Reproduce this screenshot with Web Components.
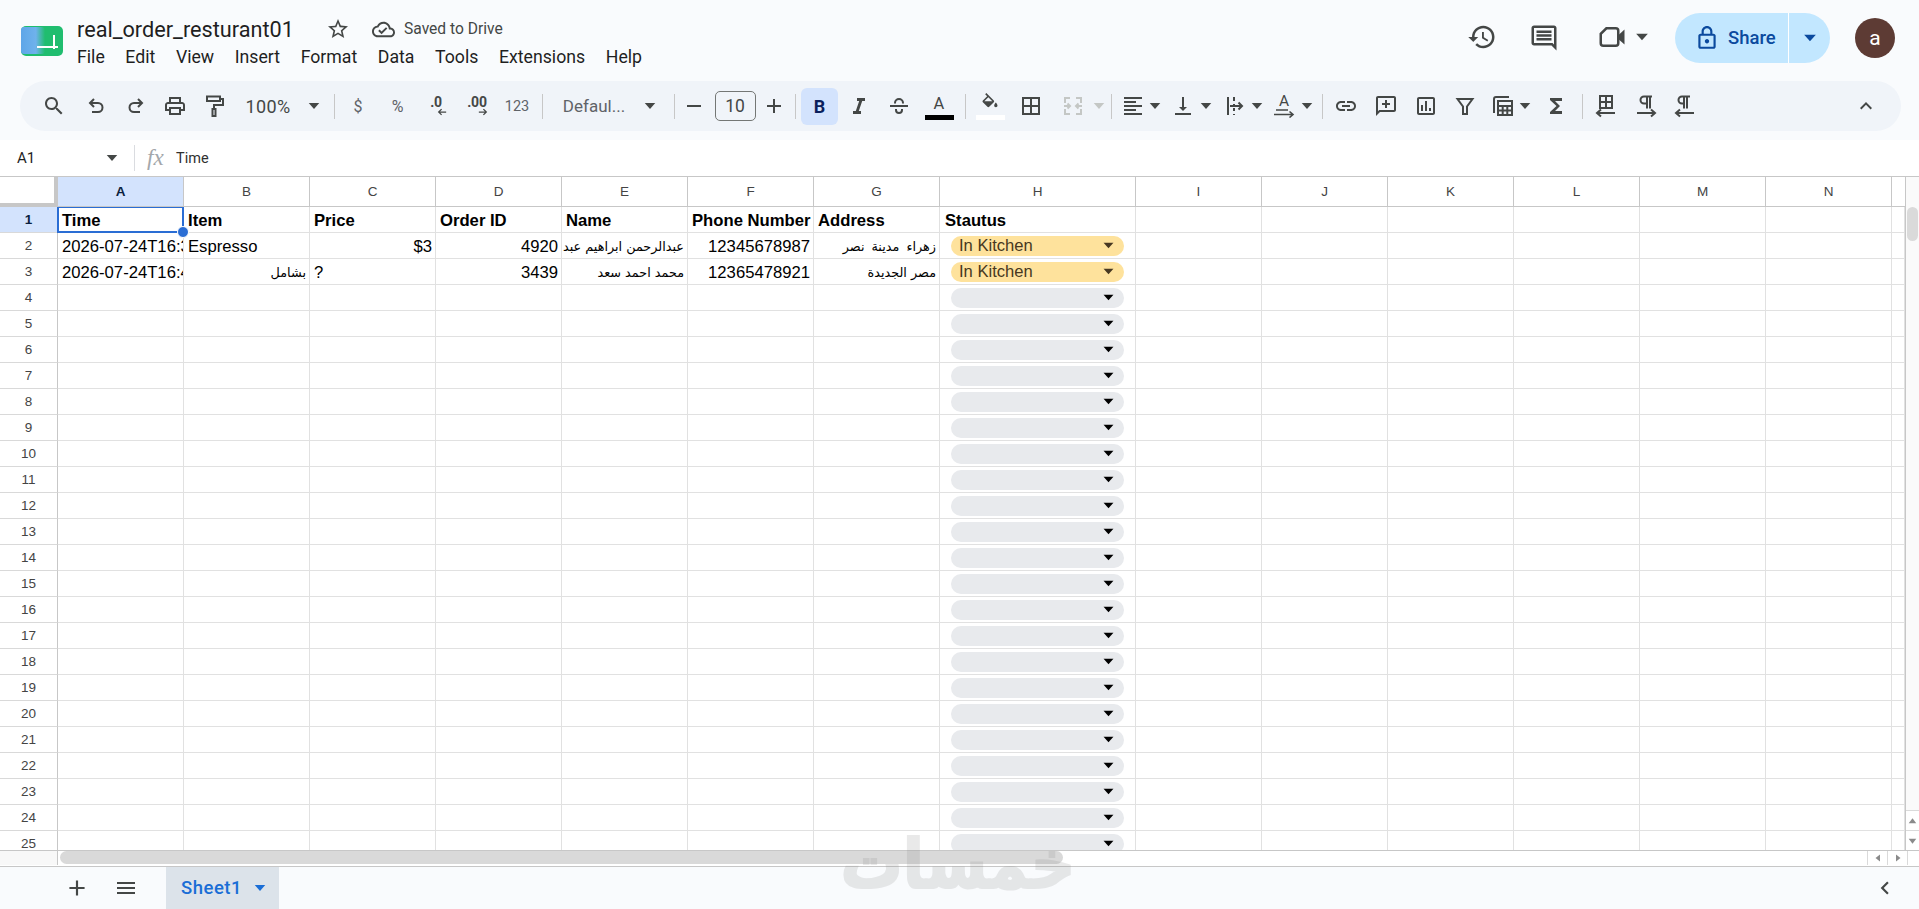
<!DOCTYPE html>
<html lang="en"><head><meta charset="utf-8"><title>real_order_resturant01</title>
<style>
html,body{margin:0;height:100%;overflow:hidden;background:#f9fbfd;font-family:Roboto,"Liberation Sans",sans-serif}
</style></head><body>
<sheet-app>
  <doc-header></doc-header>
  <sheet-toolbar></sheet-toolbar>
  <formula-bar></formula-bar>
  <sheet-grid></sheet-grid>
  <sheet-tabs></sheet-tabs>
  <water-mark>خمسات</water-mark>
</sheet-app>
<script>
const P={
search:'<path d="M15.5 14h-.79l-.28-.27C15.41 12.59 16 11.11 16 9.5 16 5.91 13.09 3 9.5 3S3 5.91 3 9.5 5.91 16 9.5 16c1.61 0 3.09-.59 4.23-1.57l.27.28v.79l5 4.99L20.49 19l-4.99-5zm-6 0C7.01 14 5 11.99 5 9.5S7.01 5 9.5 5 14 7.01 14 9.5 11.99 14 9.5 14z"/>',
undo:'<path fill="none" stroke="currentColor" stroke-width="2" d="M10 5 6 9l4 4M6 9h8a4.5 4.5 0 0 1 0 9H8"/>',
redo:'<path fill="none" stroke="currentColor" stroke-width="2" d="M14 5l4 4-4 4M18 9h-8a4.5 4.5 0 0 0 0 9h6"/>',
print:'<path d="M19 8h-1V3H6v5H5c-1.66 0-3 1.34-3 3v6h4v4h12v-4h4v-6c0-1.66-1.34-3-3-3zM8 5h8v3H8V5zm8 12v2H8v-4h8v2zm2-2v-2H6v2H4v-4c0-.55.45-1 1-1h14c.55 0 1 .45 1 1v4h-2z"/>',
paint:'<path fill="none" stroke="currentColor" stroke-width="2" d="M4 2.5h13v4.5H4zM17 5h3v6h-9v4M9.5 15h3v7h-3z"/>',
history:'<path d="M13 3c-4.97 0-9 4.03-9 9H1l3.89 3.89.07.14L9 12H6c0-3.87 3.13-7 7-7s7 3.13 7 7-3.13 7-7 7c-1.93 0-3.68-.79-4.94-2.06l-1.42 1.42C8.27 19.99 10.51 21 13 21c4.97 0 9-4.03 9-9s-4.03-9-9-9zm-1 5v5l4.28 2.54.72-1.21-3.5-2.08V8H12z"/>',
comment:'<path d="M20 2H4c-1.1 0-2 .9-2 2v12c0 1.1.9 2 2 2h14l4 4V4c0-1.1-.9-2-2-2zm0 15.17L18.83 16H4V4h16v13.17zM18 6H6v2h12zm0 3H6v2h12zm0 3H6v2h12z"/>',
video:'<path fill="none" stroke="currentColor" stroke-width="2" d="M7.5 5H15a2 2 0 0 1 2 2v10a2 2 0 0 1-2 2H5a2 2 0 0 1-2-2V9.5z"/><path d="M17 10.5l5-4.5v12l-5-4.5z"/>',
lock:'<path d="M18 8h-1V6c0-2.76-2.24-5-5-5S7 3.24 7 6v2H6c-1.1 0-2 .9-2 2v10c0 1.1.9 2 2 2h12c1.1 0 2-.9 2-2V10c0-1.1-.9-2-2-2zM9 6c0-1.66 1.34-3 3-3s3 1.34 3 3v2H9V6zm9 14H6V10h12v10zm-6-3c1.1 0 2-.9 2-2s-.9-2-2-2-2 .9-2 2 .9 2 2 2z"/>',
star:'<path d="M22 9.24l-7.19-.62L12 2 9.19 8.63 2 9.24l5.46 4.73L5.82 21 12 17.27 18.18 21l-1.63-7.03L22 9.24zM12 15.4l-3.76 2.27 1-4.28-3.32-2.88 4.38-.38L12 6.1l1.71 4.04 4.38.38-3.32 2.88 1 4.28L12 15.4z"/>',
cloud:'<path d="M19.35 10.04C18.67 6.59 15.64 4 12 4 9.11 4 6.6 5.64 5.35 8.04 2.34 8.36 0 10.91 0 14c0 3.31 2.69 6 6 6h13c2.76 0 5-2.24 5-5 0-2.64-2.05-4.78-4.65-4.96zM19 18H6c-2.21 0-4-1.79-4-4 0-2.05 1.53-3.76 3.56-3.97l1.07-.11.5-.95C8.08 7.14 9.94 6 12 6c2.62 0 4.88 1.86 5.39 4.43l.3 1.5 1.53.11c1.56.1 2.78 1.41 2.78 2.96 0 1.65-1.35 3-3 3zm-9-3.82l-2.09-2.09L6.5 13.5 10 17l6.01-6.01-1.41-1.41z"/>',
strike:'<path d="M3 11h18v2H3z"/><path fill="none" stroke="currentColor" stroke-width="2" d="M8 9.5V9a4 4 0 0 1 8 0v.5M9 15v1a3 3 0 0 0 6 0v-1"/>',
italic:'<path d="M10 4v3h2.21l-3.42 10H6v3h8v-3h-2.21l3.42-10H18V4z"/>',
minus:'<path d="M19 13H5v-2h14v2z"/>',
plus:'<path d="M19 13h-6v6h-2v-6H5v-2h6V5h2v6h6v2z"/>',
fill:'<path d="M16.56 8.94L7.62 0 6.21 1.41l2.38 2.38-5.15 5.15c-.59.59-.59 1.54 0 2.12l5.5 5.5c.29.29.68.44 1.06.44s.77-.15 1.06-.44l5.5-5.5c.59-.58.59-1.53 0-2.12zM5.21 10L10 5.21 14.79 10H5.21zM19 11.5s-2 2.17-2 3.5c0 1.1.9 2 2 2s2-.9 2-2c0-1.33-2-3.5-2-3.5z"/>',
borders:'<path d="M3 3v18h18V3H3zm8 16H5v-6h6v6zm0-8H5V5h6v6zm8 8h-6v-6h6v6zm0-8h-6V5h6v6z"/>',
merge:'<path fill="none" stroke="currentColor" stroke-width="2" d="M4 9V4h5M15 4h5v5M4 15v5h5M15 20h5v-5M3 12h6M6.5 9.5 9 12l-2.5 2.5M21 12h-6M17.5 9.5 15 12l2.5 2.5"/>',
align:'<path d="M15 15H3v2h12v-2zm0-8H3v2h12V7zM3 13h18v-2H3v2zm0 8h18v-2H3v2zM3 3v2h18V3H3z"/>',
valign:'<path d="M16 13h-3V3h-2v10H8l4 4 4-4zM4 19v2h16v-2H4z"/>',
wrap:'<path fill="none" stroke="currentColor" stroke-width="2" d="M5 3v18M11 3v4M11 10v1M11 14v3M11 20v1M7 12h12M15.5 8.5 19 12l-3.5 3.5"/>',
link:'<path d="M3.9 12c0-1.71 1.39-3.1 3.1-3.1h4V7H7c-2.76 0-5 2.24-5 5s2.24 5 5 5h4v-1.9H7c-1.71 0-3.1-1.39-3.1-3.1zM8 13h8v-2H8v2zm9-6h-4v1.9h4c1.71 0 3.1 1.39 3.1 3.1s-1.39 3.1-3.1 3.1h-4V17h4c2.76 0 5-2.24 5-5s-2.24-5-5-5z"/>',
addc:'<path d="M20 2H4c-1.1 0-2 .9-2 2v18l4-4h14c1.1 0 2-.9 2-2V4c0-1.1-.9-2-2-2zm0 14H5.17L4 17.17V4h16v12zM11 14h2v-3h3V9h-3V6h-2v3H8v2h3z"/>',
chart:'<path d="M19 3H5c-1.1 0-2 .9-2 2v14c0 1.1.9 2 2 2h14c1.1 0 2-.9 2-2V5c0-1.1-.9-2-2-2zm0 16H5V5h14v14zM7 11h2v6H7zm4-4h2v10h-2zm4 7h2v3h-2z"/>',
filter:'<path fill="none" stroke="currentColor" stroke-width="2" d="M4.5 5h15L14 12.5V20h-4v-7.5z"/>',
table:'<path fill="none" stroke="currentColor" stroke-width="2" d="M3 19V5a2 2 0 0 1 2-2h13M7 7h14v14H7zM7 12h14M7 16.5h14M11.7 12v9M16.3 12v9"/>',
sigma:'<path d="M18 4H6v2l6.5 6L6 18v2h12v-3h-7l5-5-5-5h7z"/>',
tblarrow:'<path fill="none" stroke="currentColor" stroke-width="2" d="M6 2h12v12H6zM6 8h12M12 2v12M3 19h18M7 15.5 3 19l4 3.5"/>',
pararight:'<path fill="none" stroke="currentColor" stroke-width="2" d="M13 2.5v12M16 2.5v12M18 2.5h-8a3.5 3.5 0 0 0 0 7h3M3 19h18M17 15.5l4 3.5-4 3.5"/>',
paraleft:'<path fill="none" stroke="currentColor" stroke-width="2" d="M11 2.5v12M14 2.5v12M17 2.5H9a3.5 3.5 0 0 0 0 7h2M3 19h18M7 15.5 3 19l4 3.5"/>',
chevup:'<path d="M7.41 15.41 12 10.83l4.59 4.58L18 14l-6-6-6 6z"/>',
chevleft:'<path d="M15.41 7.41 14 6l-6 6 6 6 1.41-1.41L10.83 12z"/>',
menu:'<path d="M3 18h18v-2H3v2zm0-5h18v-2H3v2zm0-7v2h18V6H3z"/>',
drop:'<path d="M5 8h14l-7 8z"/>',
arrl:'<path fill="none" stroke="currentColor" stroke-width="3" d="M22 12H5M11 5l-7 7 7 7"/>',
arrr:'<path fill="none" stroke="currentColor" stroke-width="3" d="M2 12h17M13 5l7 7-7 7"/>',
up:'<path d="M12 7l7 9H5z"/>',down:'<path d="M12 17l7-9H5z"/>',left:'<path d="M7 12l9-7v14z"/>',right:'<path d="M17 12L8 5v14z"/>',
};
const def=(n,html,extra)=>customElements.define(n,class extends HTMLElement{
  connectedCallback(){ if(this.shadowRoot) return; const r=this.attachShadow({mode:'open'}); r.innerHTML=typeof html==='function'?html(this):html; extra&&extra(r,this);}
});
def('g-icon',h=>{const s=h.getAttribute('size')||24,n=h.getAttribute('name');
 return `<style>:host{display:inline-flex;align-items:center;justify-content:center;flex:none;color:inherit}svg{display:block;fill:currentColor}</style><svg width="${s}" height="${s}" viewBox="0 0 24 24">${P[n]}</svg>`});
def('sheet-app',`<style>:host{display:flex;flex-direction:column;height:909px;width:1919px;position:relative;overflow:hidden;background:#f9fbfd;color:#1f1f1f}</style><slot></slot>`);
def('doc-logo',`<style>:host{display:block;width:42px;height:30px;flex:none}svg{display:block}</style>
<svg width="42" height="30" viewBox="0 0 42 30"><defs><linearGradient id="f" x1="0" x2="1" y1="0" y2="0"><stop offset="0" stop-color="#5ea6e8"/><stop offset=".62" stop-color="#6fb2ec"/><stop offset="1" stop-color="#6fb2ec" stop-opacity="0"/></linearGradient></defs>
<rect x="0" y="0" width="42" height="30" rx="5" fill="#20bd6f"/><rect x="0" y="1" width="24" height="27" rx="3" fill="url(#f)"/><path d="M16 21h21M33 9v14" stroke="#fff" stroke-width="2" fill="none"/></svg>`);
def('doc-header',`<style>
:host{display:flex;height:81px;flex:none;box-sizing:border-box;padding-left:21px;align-items:flex-start;color:#1f1f1f}
doc-logo{margin-top:26px}
.mid{margin-left:14px;display:flex;flex-direction:column}
.title{display:flex;align-items:center;height:30px;margin-top:14px}
.name{font-size:21.7px;white-space:nowrap;width:249px;color:#1f1f1f}
.saved{font-size:15.6px;color:#444746;margin-left:9px;white-space:nowrap}
.star{color:#444746;width:24px;justify-content:center}
.cloud{color:#444746;margin-left:22px}
.menu{display:flex;gap:20.6px;font-size:17.7px;margin-top:1px;height:24px;align-items:center;margin-left:0}
.right{margin-left:auto;display:flex;align-items:flex-start;color:#444746;padding-right:24px}
.right>g-icon{margin-top:22px}
.share{display:flex;height:50px;margin-top:13px;margin-left:23px;border-radius:25px;overflow:hidden;background:#c2e7ff;color:#0b4a9e;width:155px;align-items:center}
.sm{display:flex;align-items:center;width:114px;height:100%;border-right:1px solid #fff;padding-left:19px;box-sizing:border-box;gap:8px;font-size:18.5px;font-weight:500}
.sd{flex:1;display:flex;justify-content:center}
.av{width:40px;height:40px;border-radius:50%;background:#5d3b34;color:#fff;display:flex;align-items:center;justify-content:center;font-size:21px;margin:18px 0 0 25px}
</style><doc-logo></doc-logo>
<div class="mid"><div class="title"><span class="name">real_order_resturant01</span><g-icon class="star" name="star" size="24"></g-icon><g-icon class="cloud" name="cloud" size="23"></g-icon><span class="saved">Saved to Drive</span></div>
<div class="menu"><span>File</span><span>Edit</span><span>View</span><span>Insert</span><span>Format</span><span>Data</span><span>Tools</span><span>Extensions</span><span>Help</span></div></div>
<div class="right"><g-icon name="history" size="30"></g-icon><g-icon name="comment" size="30" style="margin-left:32px;margin-top:23px"></g-icon><g-icon name="video" size="30" style="margin-left:38px"></g-icon><g-icon name="drop" size="20" style="margin-left:5.5px;margin-top:27px"></g-icon>
<div class="share"><div class="sm"><g-icon name="lock" size="26"></g-icon><span>Share</span></div><div class="sd"><g-icon name="drop" size="20"></g-icon></div></div><div class="av">a</div></div>`);

const TB=[
['i','search',53.5],['i','undo',96],['i','redo',135.5],['i','print',175],['i','paint',214.5],
['t','100%',268,52,'font-size:18px;letter-spacing:.35px'],['d','',314],['s','',334],
['t','$',358,24,'font-size:16px;color:#5f6368'],['t','%',397.5,24,'font-size:16px;color:#5f6368'],['dec','.0',436,'l'],['dec','.00',477,'r'],['t','123',517,30,'font-size:14.5px;color:#5f6368'],['s','',542],
['t','Defaul...',594,70,'font-size:17px;color:#5f6368'],['d','',650],['s','',674.5],
['i','minus',694],['box','10',735],['i','plus',774],['s','',795.5],
['b','B',819.5],['i','italic',859,20],['i','strike',898.5],['ca','A',939],['s','',965],
['fi','',990],['i','borders',1031],['i','merge',1073,24,'color:#c4c7c5'],['d','',1098.5,'color:#c4c7c5'],['s','',1111],
['i','align',1132.5],['d','',1154.5],['i','valign',1183],['d','',1205.5],['i','wrap',1234.5],['d','',1257],['ra','A',1284],['d','',1307],['s','',1322.5],
['i','link',1346],['i','addc',1386],['i','chart',1425.5],['i','filter',1465],['i','table',1503],['d','',1525],['i','sigma',1555.5],['s','',1582],
['i','tblarrow',1606],['i','pararight',1645.5],['i','paraleft',1685],['i','chevup',1866]];
def('sheet-toolbar',`<style>
:host{display:flex;flex:none;height:59px;box-sizing:border-box;padding:0 18px 9px 20px}
.pill{flex:1;height:50px;border-radius:25px;background:#f0f4f9;display:flex;align-items:center;color:#444746}
.t{display:flex;align-items:center;justify-content:center;white-space:nowrap;flex:none}
.s{width:1px;height:25px;background:#c7c7c7;flex:none}
.box{width:41px;height:30px;box-sizing:border-box;border:1px solid #747775;border-radius:5px;font-size:17.5px;display:flex;align-items:center;justify-content:center;flex:none}
.b{width:37px;height:37px;border-radius:6px;background:#d3e3fd;color:#0b1f5c;font:700 18px Roboto,sans-serif;display:flex;align-items:center;justify-content:center;flex:none}
.col{display:flex;flex-direction:column;align-items:center;flex:none;width:30px;height:28px;justify-content:flex-start;position:relative;margin-top:-1px}
.col span{font-size:16.5px;line-height:18px;margin-top:3px}
.bar{width:29px;height:5px;position:absolute;bottom:0;left:.5px}
.dec{display:flex;flex-direction:column;align-items:center;width:30px;flex:none;height:28px;color:#444746}
.dec span{font:700 14px/15px Roboto,sans-serif;letter-spacing:-.2px;margin-top:3px}
.dec g-icon{margin-top:-3px;margin-left:12px}
.ra{display:flex;flex-direction:column;align-items:center;width:24px;flex:none;height:26px}
.ra span{font-size:15.5px;line-height:16px}
</style><div class="pill"></div>`,(r)=>{
 const pill=r.querySelector('.pill');let cur=0;const X0=20;
 for(const it of TB){const [k,v,c]=it;let w=24,el=document.createElement('div');
  if(k==='i'){w=it[3]||24;if(w<24)w=24;el=document.createElement('g-icon');el.setAttribute('name',v);el.setAttribute('size','24');if(it[4])el.style.cssText=it[4];}
  else if(k==='d'){w=18;el=document.createElement('g-icon');el.setAttribute('name','drop');el.setAttribute('size','18');if(it[3])el.style.cssText=it[3];}
  else if(k==='s'){w=1;el.className='s';}
  else if(k==='t'){w=it[3];el.className='t';el.textContent=v;el.style.cssText=`width:${w}px;${it[4]}`;}
  else if(k==='box'){w=41;el.className='box';el.textContent=v;}
  else if(k==='b'){w=37;el.className='b';el.textContent=v;}
  else if(k==='ca'){w=30;el.className='col';el.innerHTML=`<span>${v}</span><div class="bar" style="background:#000"></div>`;}
  else if(k==='fi'){w=30;el.className='col';el.innerHTML=`<g-icon name="fill" size="20" style="margin-top:1px"></g-icon><div class="bar" style="background:#fff"></div>`;}
  else if(k==='dec'){w=30;el.className='dec';el.innerHTML=`<span>${v}</span><g-icon name="${it[3]==='l'?'arrl':'arrr'}" size="10"></g-icon>`;}
  else if(k==='ra'){w=24;el.className='ra';el.innerHTML=`<span>${v}</span><svg width="22" height="9" viewBox="0 0 22 9" fill="none" stroke="currentColor" stroke-width="1.6" style="display:block"><path d="M3 1h12M1 5.5h19M16.5 2.5l3.5 3-3.5 3"/></svg>`;}
  const ml=c-X0-w/2-cur; el.style.marginLeft=ml+'px'; cur=c-X0+w/2; pill.appendChild(el);
 }
});
def('formula-bar',`<style>
:host{display:flex;flex:none;height:36px;background:#fff;align-items:center;color:#1f1f1f}
.nm{font-size:15px;margin-left:17px;width:86px}
.s{width:1px;height:26px;background:#dadce0;margin-left:13px}
.fx{font:italic 23px "Liberation Serif",serif;color:#a3a7ab;margin-left:12px;width:29px}
.v{font:14.5px Roboto,sans-serif;color:#303030}
g-icon{color:#444746}
</style><span class="nm">A1</span><g-icon name="drop" size="18"></g-icon><div class="s"></div><span class="fx">fx</span><span class="v">Time</span>`);
def('status-chip',h=>{const y=h.hasAttribute('on');return `<style>
:host{display:flex;align-items:center;height:20px;width:173px;margin-left:11px;border-radius:10px;background:${y?'#fee29c':'#e8eaed'};color:${y?'#473821':'#000'};box-sizing:border-box;padding:0 7px 0 8px;font:16.6px "Liberation Sans",sans-serif}
span{flex:1;padding-top:1px}
</style><span><slot></slot></span><g-icon name="drop" size="17"></g-icon>`});
const cols='ABCDEFGHIJKLMN'.split('');
const DATA={1:[['Time','b'],['Item','b'],['Price','b'],['Order ID','b'],['Name','b'],['Phone Number','b'],['Address','b'],['Stautus','b h']],
2:[['2026-07-24T16:3',''],['Espresso',''],['$3','r'],['4920','r'],['عبدالرحمن ابراهيم عبد','ar'],['12345678987','r'],['زهراء مدينة نصر','ar w']],
3:[['2026-07-24T16:4',''],['بشامل','ar'],['?',''],['3439','r'],['محمد احمد سعد','ar'],['12365478921','r'],['مصر الجديدة','ar']]};
function rowsHtml(){let s='';for(let r=1;r<=25;r++){s+=`<div class="row"><div class="rh${r==1?' sel':''}">${r}</div>`;
 for(let c=0;c<15;c++){let d=DATA[r]&&DATA[r][c];let cls='c'+(d?' '+d[1]:'');let inner=d?d[0]:'';
  if(c==7&&r>1){inner=r<=3?'<status-chip on>In Kitchen</status-chip>':'<status-chip></status-chip>';cls+=' chip';}
  if(r==1&&c==0){cls+=' active';inner+='<i class="hd"></i>';}
  s+=`<div class="${cls}">${inner}</div>`;}
 s+='</div>';}return s;}
const GT='grid-template-columns:58px repeat(7,126px) 196px repeat(6,126px) 1fr';
def('sheet-grid',()=>`<style>
:host{display:flex;flex-direction:column;flex:1;min-height:0;background:#fff;font:16.67px "Liberation Sans","DejaVu Sans",sans-serif;color:#000;border-top:1px solid #c7c7c7;box-sizing:border-box}
.top{display:flex;flex:1;min-height:0}
.main{flex:1;min-width:0;display:flex;flex-direction:column}
.head{display:grid;${GT};height:30px;flex:none}
.head div{box-sizing:border-box;border-right:1px solid #c7c7c7;border-bottom:1px solid #c7c7c7;display:flex;align-items:center;justify-content:center;font:13.5px "Liberation Sans",sans-serif;color:#444}
.head .corner{border-right:4px solid #c7c7c7;border-bottom:4px solid #c7c7c7}
.head .sel{background:#d3e3fd;font-weight:700;color:#0b1f3f}
.rows{flex:1;overflow:hidden}
.row{display:grid;${GT};height:26px}
.rh{box-sizing:border-box;border-right:1px solid #c7c7c7;border-bottom:1px solid #d9d9d9;display:flex;align-items:center;justify-content:center;font:13.5px "Liberation Sans",sans-serif;color:#444}
.rh.sel{background:#d3e3fd;font-weight:700;color:#0b1f3f}
.c{box-sizing:border-box;border-right:1px solid #e1e1e1;border-bottom:1px solid #e1e1e1;padding:2px 3px 0 4px;display:flex;align-items:center;overflow:hidden;white-space:nowrap;position:relative;min-width:0}
.b{font-weight:700}.r{justify-content:flex-end}.h{padding-left:5px}
.ar{direction:rtl;justify-content:flex-start;font-size:12.8px;font-family:"DejaVu Sans",sans-serif;padding:2px 3px 0}
.w{word-spacing:3px}
.c.chip{padding:0}
.active{overflow:visible;z-index:2}
.active::after{content:"";position:absolute;left:-1px;top:-1px;right:-1px;bottom:-1px;border:2px solid #2a6dd4}
.hd{position:absolute;right:-6px;bottom:-6px;width:10px;height:10px;border-radius:50%;background:#2a6dd4;border:1px solid #fff;z-index:3}
.vs{width:14px;flex:none;border-left:1px solid #c7c7c7;background:#fafafa;display:flex;flex-direction:column;align-items:stretch;box-sizing:border-box;color:#8a8a8a}
.vthumb{margin:30px 1px 0 1px;height:34px;border-radius:6px;background:#dadada}
.vb{margin-top:auto;background:#fff}
.vb g-icon{display:flex;height:19px;border-top:1px solid #dadada;box-sizing:content-box}
.hs{height:16px;flex:none;border-top:1px solid #c7c7c7;display:flex;box-sizing:border-box;background:#fff;color:#8a8a8a;border-bottom:1px solid #fff}
.st{width:58px;box-sizing:border-box;background:#f8f8f8;border-right:1px solid #c7c7c7;flex:none}
.hthumb{width:1003px;margin-left:2px;height:13px;border-radius:7px;background:#d9d9d9}
.hb{margin-left:auto;display:flex;height:14px}
.hb g-icon{width:20px;border-left:1px solid #dadada;height:14px;box-sizing:border-box}
</style>
<div class="top"><div class="main"><div class="head"><div class="corner"></div>${cols.map((c,i)=>`<div class="${i==0?'sel':''}">${c}</div>`).join('')}<div style="border-right:0"></div></div>
<div class="rows">${rowsHtml()}</div></div>
<div class="vs"><div class="vthumb"></div><div class="vb"><g-icon name="up" size="14"></g-icon><g-icon name="down" size="14"></g-icon></div></div></div>
<div class="hs"><div class="st"></div><div class="hthumb"></div><div class="hb"><g-icon name="left" size="12"></g-icon><g-icon name="right" size="12"></g-icon><g-icon name="right" size="0" style="width:12px"></g-icon></div></div>`);
def('sheet-tabs',`<style>
:host{display:flex;align-items:stretch;height:43px;flex:none;box-sizing:border-box;border-top:1px solid #c7c7c7;background:#f9fbfd;color:#444746}
.a{display:flex;align-items:center;margin-left:64px}
.a2{display:flex;align-items:center;margin-left:24px}
.tab{margin-left:28px;width:113px;background:#dce3ea;color:#1a6ed6;font-weight:500;font-size:18.5px;display:flex;align-items:center;box-sizing:border-box;padding-left:15px;gap:9px;letter-spacing:.5px}
.e{margin-left:auto;display:flex;align-items:center;margin-right:21px}
</style><div class="a"><g-icon name="plus" size="26"></g-icon></div><div class="a2"><g-icon name="menu" size="24"></g-icon></div>
<div class="tab"><span>Sheet1</span><g-icon name="drop" size="18"></g-icon></div><div class="e"><g-icon name="chevleft" size="26"></g-icon></div>`);
def('water-mark',`<style>:host{position:absolute;left:840px;top:830px;width:236px;height:70px;display:flex;align-items:center;justify-content:center;font:700 62px/70px "DejaVu Sans",sans-serif;color:#8a8a8a;opacity:.18;pointer-events:none;direction:rtl;white-space:nowrap;transform:scaleY(1.1);-webkit-text-stroke:2px #8a8a8a}</style><slot></slot>`);
</script>
</body></html>
